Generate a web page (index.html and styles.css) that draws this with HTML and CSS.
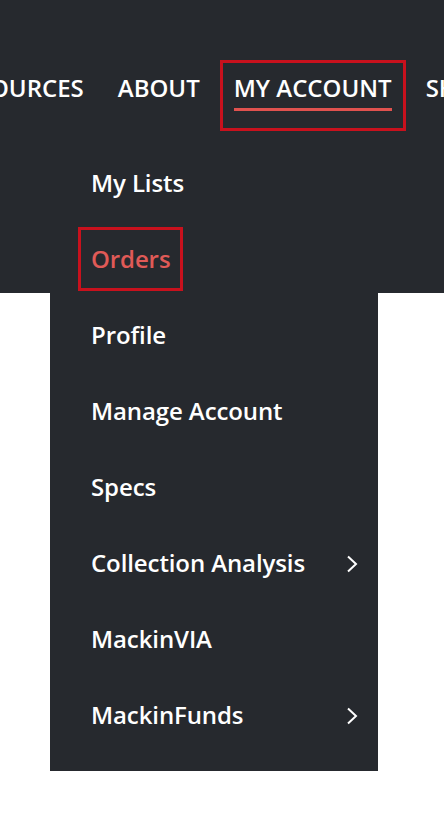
FILE: index.html
```html
<!DOCTYPE html>
<html>
<head>
	<title>My Account Menu</title>
	<link rel="stylesheet" href="styles.css">
</head>
<body>
	<div class="page">
		<nav class="main-nav">
			<a class="nav-link" href="#"><span class="nav-label">RESOURCES</span></a>
			<a class="nav-link" href="#"><span class="nav-label">ABOUT</span></a>
			<a class="nav-link is-active" href="#"><span class="nav-label">MY ACCOUNT</span></a>
			<a class="nav-link" href="#"><span class="nav-label">SHOP</span></a>
		</nav>

		<ul class="dropdown">
			<li class="dropdown-item"><a href="#">My Lists</a></li>
			<li class="dropdown-item"><a class="is-current" href="#">Orders</a></li>
			<li class="dropdown-item"><a href="#">Profile</a></li>
			<li class="dropdown-item"><a href="#">Manage Account</a></li>
			<li class="dropdown-item"><a href="#">Specs</a></li>
			<li class="dropdown-item">
				<a href="#">Collection Analysis</a>
				<svg class="chevron" width="12" height="18" viewBox="0 0 12 18"><polyline points="2,1.5 10,9 2,16.5" fill="none" stroke="#fff" stroke-width="2"/></svg>
			</li>
			<li class="dropdown-item"><a href="#">MackinVIA</a></li>
			<li class="dropdown-item">
				<a href="#">MackinFunds</a>
				<svg class="chevron" width="12" height="18" viewBox="0 0 12 18"><polyline points="2,1.5 10,9 2,16.5" fill="none" stroke="#fff" stroke-width="2"/></svg>
			</li>
		</ul>
	</div>
</body>
</html>
```

FILE: styles.css
```css
/* Dark header band with the account dropdown opened */
body {
	margin: 0;
	background: #fff;
	font-family: "Open Sans", "Noto Sans", sans-serif;
	overflow: hidden;
}

a {
	text-decoration: none;
	color: #fff;
}

.page {
	min-height: 826px;
	background: linear-gradient(#26292e 0, #26292e 293px, #fff 293px);
}

.main-nav {
	display: flex;
	gap: 6px;
	padding-top: 60px;
	margin-left: -66px;
	white-space: nowrap;
}

.nav-link {
	display: block;
	flex: none;
	padding: 10px 11px 17px;
	border: 3px solid transparent;
	font-size: 24px;
	font-weight: 600;
}

.nav-link.is-active {
	border-color: #c8111d;
}

.nav-label {
	display: block;
	line-height: 30px;
	padding-bottom: 5px;
	border-bottom: 3px solid transparent;
}

.is-active .nav-label {
	border-bottom-color: #e0524f;
}

.dropdown {
	width: 328px;
	margin: 0 0 0 50px;
	padding: 14px 0 18px;
	list-style: none;
	background-color: #26292e;
}

.dropdown-item {
	display: flex;
	align-items: center;
	justify-content: space-between;
	height: 76px;
	padding: 0 20px 0 28px;
}

.dropdown-item a {
	display: block;
	padding: 13px 10px 13px;
	border: 3px solid transparent;
	font-size: 24px;
	font-weight: 600;
	letter-spacing: -0.1px;
	line-height: 32px;
}

.dropdown-item a.is-current {
	color: #e05a57;
	border-color: #c8111d;
}

.chevron {
	display: block;
	margin-top: 2px;
}
```
